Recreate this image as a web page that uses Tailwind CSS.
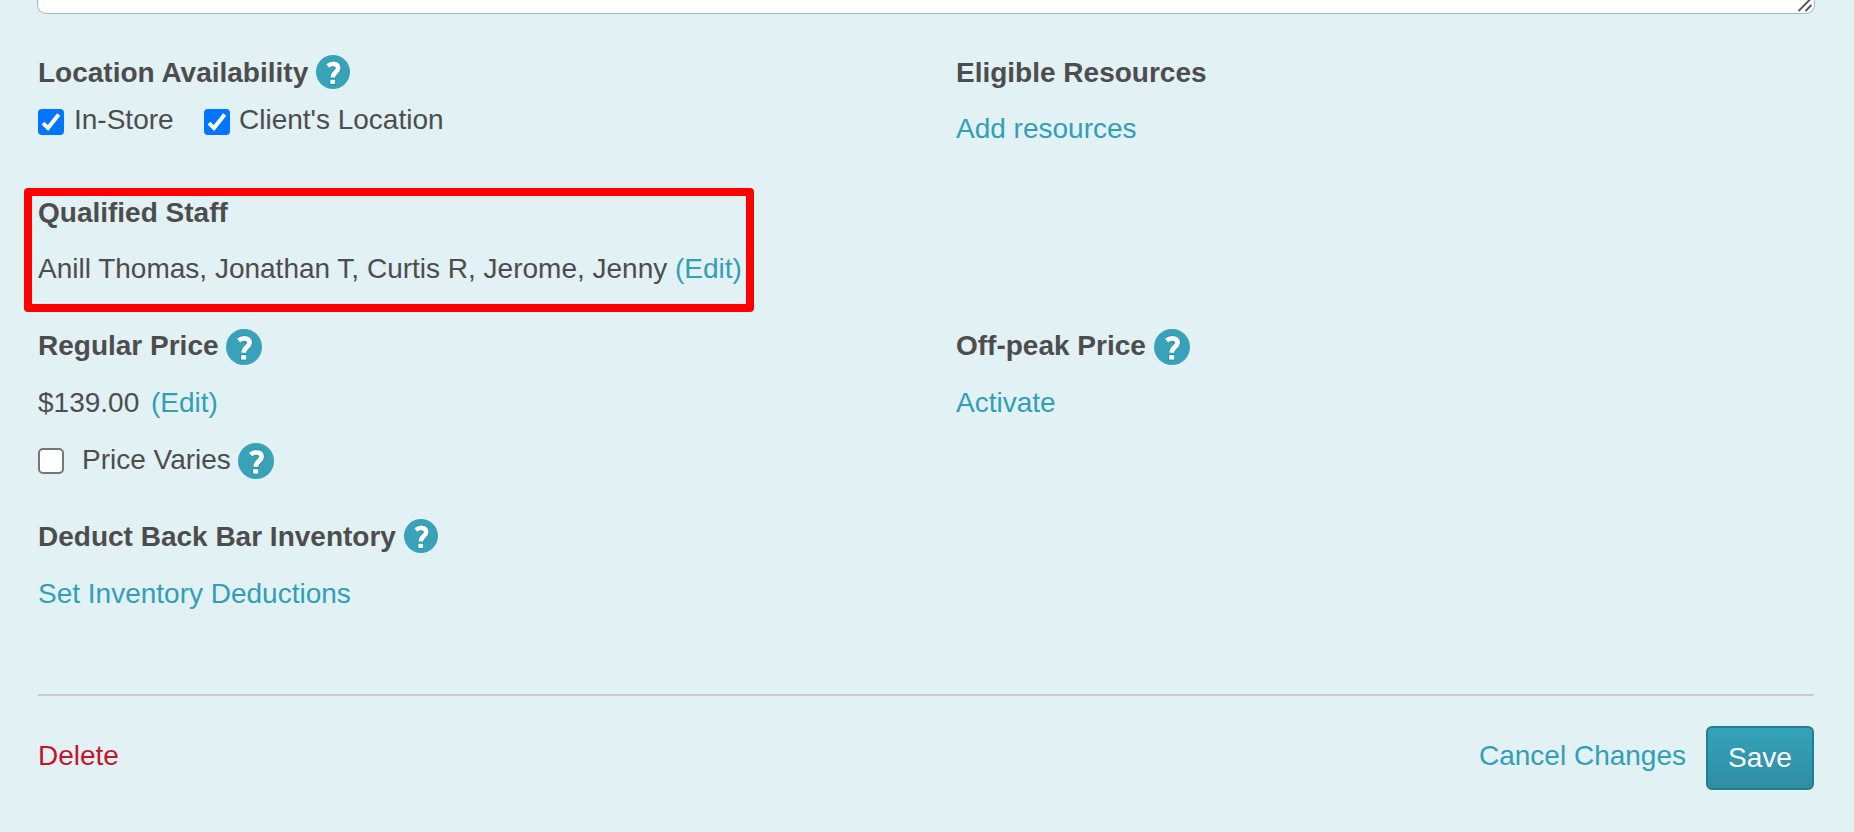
<!DOCTYPE html>
<html lang="en">

<head>
    <meta charset="UTF-8">
    <meta name="viewport" content="width=device-width, initial-scale=1.0">
    <title>Edit Service</title>
    <script src="https://cdn.jsdelivr.net/npm/@tailwindcss/browser@4"></script>
</head>

<body class="bg-[#e1f1f4] font-['Liberation_Sans',Arial,sans-serif] text-[28px] leading-[34px] text-[#4d4d4d]">
    <svg class="hidden">
        <symbol id="help" viewBox="0 0 34 34">
            <circle cx="17" cy="17" r="17" fill="#37a2b8" />
            <path d="M11.8 10.900C13.400 9.500 15.200 8.900 17.200 8.900c3.200 0 5 1.500 5 4.200 0 3.900-5.400 4-5.400 9.600" fill="none" stroke="#1e8fa7" stroke-width="5.800" />
            <path d="M13.600 23.900h6.100v5.800h-6.100z" fill="#1e8fa7" />
            <path d="M11.800 10.900C13.400 9.500 15.200 8.900 17.200 8.900c3.200 0 5 1.500 5 4.200 0 3.900-5.400 4-5.400 9.400" fill="none" stroke="#fff" stroke-width="4.600" />
            <path d="M14.300 24.700h4.800v4.200h-4.800z" fill="#fff" />
        </symbol>
        <symbol id="check" viewBox="0 0 26 26">
            <rect width="26" height="26" rx="4" fill="#0075ff" />
            <path d="M5 14.100l5 5L20.700 5.500" fill="none" stroke="#fff" stroke-width="4" />
        </symbol>
    </svg>

    <div class="flex flex-col h-[832px] pl-[38px] pr-10 overflow-hidden">
        <!-- description field -->
        <div class="flex justify-end items-end h-3.5 -ml-px -mr-px bg-white border-x border-b border-[#a5b9bd] rounded-b-[9px]">
            <svg class="w-4 h-3.5" viewBox="0 0 16 14" fill="none" stroke="#555" stroke-width="1.900">
                <path d="M.5 12L12.500 0M7.500 12l6-6" />
            </svg>
        </div>

        <div class="grid grid-cols-[918px_1fr] mt-[42px]">
            <div class="h-[132px]">
                <h2 class="flex font-bold h-8">
                    <span class="w-[278px] whitespace-nowrap">Location Availability</span>
                    <svg class="w-[34px] h-[34px] -mt-px"><use href="#help" /></svg>
                </h2>
                <div class="flex mt-[15px]">
                    <label class="flex w-[166px] gap-2.5">
                        <svg class="w-[26px] h-[26px] mt-1.5"><use href="#check" /></svg>
                        <span>In-Store</span>
                    </label>
                    <label class="flex gap-[9px]">
                        <svg class="w-[26px] h-[26px] mt-1.5"><use href="#check" /></svg>
                        <span>Client's Location</span>
                    </label>
                </div>
            </div>
            <div>
                <h2 class="h-8 font-bold">Eligible Resources</h2>
                <a href="#" class="block mt-6 text-[#329fb6]">Add resources</a>
            </div>
        </div>

        <!-- highlighted staff section -->
        <div class="w-[730px] h-[124px] -ml-3.5 pl-1.5 border-8 border-[#ff0000] rounded">
            <h2 class="h-8 font-bold">Qualified Staff</h2>
            <p class="mt-6 whitespace-nowrap">Anill Thomas, Jonathan T, Curtis R, Jerome, Jenny <a href="#" class="text-[#329fb6]">(Edit)</a></p>
        </div>

        <div class="grid grid-cols-[918px_1fr] mt-[17px]">
            <div>
                <h2 class="flex font-bold h-8">
                    <span class="w-[188px] whitespace-nowrap">Regular Price</span>
                    <svg class="w-9 h-9"><use href="#help" /></svg>
                </h2>
                <div class="flex h-8 mt-[25px]">
                    <span class="w-[113px]">$139.00</span>
                    <a href="#" class="text-[#329fb6]">(Edit)</a>
                </div>
                <label class="flex h-8 mt-[25px]">
                    <span class="w-[26px] h-[26px] mt-[5px] mr-[18px] bg-white border-2 border-[#767676] rounded-[5px]"></span>
                    <span class="w-[156px] whitespace-nowrap">Price Varies</span>
                    <svg class="w-9 h-9"><use href="#help" /></svg>
                </label>
            </div>
            <div>
                <h2 class="flex font-bold h-8">
                    <span class="w-[198px] whitespace-nowrap">Off-peak Price</span>
                    <svg class="w-9 h-9"><use href="#help" /></svg>
                </h2>
                <a href="#" class="block mt-[25px] text-[#329fb6]">Activate</a>
            </div>
        </div>

        <div class="mt-[45px]">
            <h2 class="flex font-bold h-8">
                <span class="w-[366px] whitespace-nowrap">Deduct Back Bar Inventory</span>
                <svg class="w-[34px] h-[34px] -mt-px"><use href="#help" /></svg>
            </h2>
            <a href="#" class="block h-8 mt-[25px] text-[#329fb6]">Set Inventory Deductions</a>
        </div>

        <div class="flex items-start mt-[85px] pt-[30px] border-t-2 border-[#cccccc]">
            <a href="#" class="mt-[13px] text-[#c2172c]">Delete</a>
            <a href="#" class="mt-[13px] ml-auto mr-5 text-[#329fb6]">Cancel Changes</a>
            <button class="w-[108px] h-16 pb-px text-white bg-linear-to-b from-[#34a2b7] to-[#2e8ea4] border-2 border-[#227f90] rounded-md">Save</button>
        </div>
    </div>
</body>

</html>
